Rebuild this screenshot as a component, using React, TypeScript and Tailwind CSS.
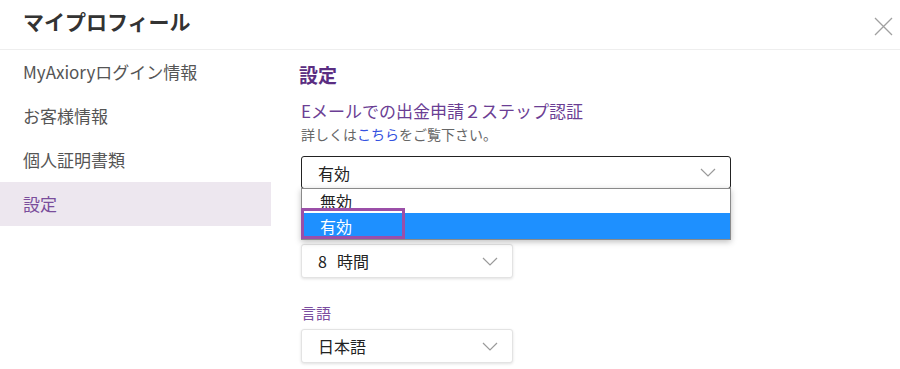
import React from "react";

const Chevron = () => (
  <svg width="16" height="9" viewBox="0 0 16 9" fill="none">
    <path d="M1 1 L8 8 L15 1" stroke="#9a9a9a" strokeWidth="1.2" />
  </svg>
);

const Select = ({ value, wide }: { value: React.ReactNode; wide?: boolean }) => (
  <div
    className={`${wide ? "w-[430px] border-[#222] h-[33px]" : "w-[212px] border-[#e3e3e3] h-[34px] shadow-[0_1px_3px_rgba(0,0,0,0.12)]"} flex items-center justify-between border rounded-[3px] bg-white pl-[16px] pr-[14px]`}
  >
    <span className="text-[16px] text-[#222]">{value}</span>
    <Chevron />
  </div>
);

export default function App() {
  const items = ["MyAxioryログイン情報", "お客様情報", "個人証明書類", "設定"];
  return (
    <div
      className="w-[900px] h-[369px] overflow-hidden bg-white relative"
      style={{ fontFamily: '"Noto Sans CJK JP", "Noto Sans", sans-serif' }}
    >
      <div className="h-[50px] border-b border-[#eeeeee] flex items-start justify-between pl-[23px] pr-[7px]">
        <div className="pt-[9px] text-[21px] leading-[24px] font-bold text-[#333]">マイプロフィール</div>
        <svg className="mt-[17px]" width="19" height="19" viewBox="0 0 19 19">
          <path d="M1 1 L18 18 M18 1 L1 18" stroke="#a0a0a0" strokeWidth="1.3" />
        </svg>
      </div>
      <div className="flex">
        <div className="w-[271px] flex flex-col">
          {items.map((t, i) => (
            <div
              key={t}
              className={`h-[44px] flex items-center pl-[23px] text-[17px] ${
                i === 3 ? "bg-[#ede7ef] text-[#7a4d9b]" : "text-[#555]"
              }`}
            >
              {t}
            </div>
          ))}
        </div>
        <div className="ml-[30px] flex flex-col relative">
          <div className="mt-[12px] text-[19px] leading-[26px] font-bold text-[#5a2d82] -ml-[2px]">設定</div>
          <div className="mt-[11px] text-[17px] leading-[24px] text-[#6b3e94]">Eメールでの出金申請２ステップ認証</div>
          <div className="mt-[1px] text-[14px] leading-[20px] text-[#666]">
            詳しくは<span className="text-[#3552e0]">こちら</span>をご覧下さい。
          </div>
          <div className="mt-[12px] relative">
            <Select value="有効" wide />
            <div className="absolute left-0 top-[32px] w-[430px] z-10 bg-white border border-[#8a8a8a] shadow-[0_2px_6px_rgba(0,0,0,0.25)]">
              <div className="h-[24px] flex items-center pl-[18px] text-[16px] text-[#222]">無効</div>
              <div className="h-[26px] flex items-center pl-[18px] text-[16px] text-white bg-[#1e90ff]">有効</div>
            </div>
            <div className="absolute left-0 top-[52px] w-[104px] h-[31px] border-[3px] border-[#9b4fa8] z-20" />
          </div>
          <div className="mt-[29px] h-[20px]" />
          <div className="mt-[6px]">
            <Select
              value={
                <>
                  8<span className="ml-[10px]">時間</span>
                </>
              }
            />
          </div>
          <div className="mt-[25px] text-[15px] leading-[20px] text-[#7b4ea0]">言語</div>
          <div className="mt-[6px]">
            <Select value="日本語" />
          </div>
        </div>
      </div>
    </div>
  );
}
